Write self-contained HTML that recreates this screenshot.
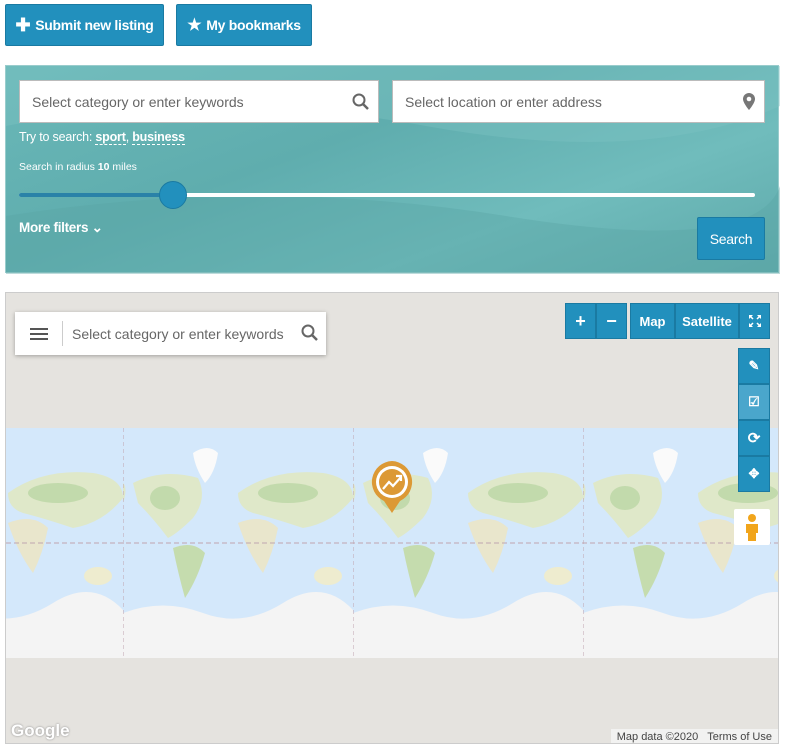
<!DOCTYPE html>
<html><head><style>
*{box-sizing:border-box;margin:0;padding:0}
body{width:787px;height:752px;background:#fff;font-family:"Liberation Sans",sans-serif;position:relative;overflow:hidden}
.btn{position:absolute;background:#2290bd;border:1px solid #1a7aa2;border-radius:2px;color:#fff;font-size:14px;font-weight:bold;display:flex;align-items:center;justify-content:center;letter-spacing:-0.3px}
.panel{position:absolute;left:5px;top:65px;width:774px;height:208px;background:linear-gradient(160deg,#6ab8b8,#5fadae 40%,#70bcbc 70%,#5ea9aa);border:1px solid #9cc}
.inp{position:absolute;background:#fff;border:1px solid #bbb;height:43px;font-size:14px;color:#666;padding-left:12px;display:flex;align-items:center}
.w{color:#fff;position:absolute}
.cb{position:absolute;background:#2290bd;color:#fff;font-size:13px;font-weight:bold;display:flex;align-items:center;justify-content:center;border:1px solid #1a7aa2}
</style></head><body>
<div class="btn" style="left:5px;top:4px;width:159px;height:42px"><span style="font-size:18px;margin-right:5px">✚</span>Submit new listing</div>
<div class="btn" style="left:176px;top:4px;width:136px;height:42px"><span style="font-size:16px;margin-right:5px">★</span>My bookmarks</div>

<div class="panel">
<svg width="774" height="208" style="position:absolute;left:0;top:0"><path d="M0 60 Q200 20 420 60 T774 40 V0 H0Z" fill="#7cc3c3" opacity=".4"/><path d="M0 150 Q250 110 500 150 T774 120 V208 H0Z" fill="#5aa5a6" opacity=".4"/></svg>
<div class="inp" style="left:13px;top:14px;width:360px">Select category or enter keywords
<svg width="18" height="18" style="position:absolute;right:8px;top:12px"><circle cx="7" cy="7" r="5.5" fill="none" stroke="#666" stroke-width="2"/><path d="M11 11l5 5" stroke="#666" stroke-width="2.5"/></svg></div>
<div class="inp" style="left:386px;top:14px;width:373px">Select location or enter address
<svg width="12" height="17" style="position:absolute;right:9px;top:12px"><path d="M6 0a6 6 0 0 0-6 6c0 4 6 11 6 11s6-7 6-11a6 6 0 0 0-6-6z" fill="#777"/><circle cx="6" cy="6" r="2.3" fill="#fff"/></svg></div>
<div class="w" style="left:13px;top:64px;font-size:12.5px;letter-spacing:-0.2px">Try to search: <b style="border-bottom:1px dashed #fff">sport</b>, <b style="border-bottom:1px dashed #fff">business</b></div>
<div class="w" style="left:13px;top:95px;font-size:10.5px">Search in radius <b>10</b> miles</div>
<div style="position:absolute;left:13px;top:127px;width:736px;height:4px;background:#fff;border-radius:2px"></div>
<div style="position:absolute;left:13px;top:127px;width:155px;height:4px;background:#2a82a8;border-radius:2px"></div>
<div style="position:absolute;left:153px;top:115px;width:28px;height:28px;border-radius:50%;background:#2290bd;border:1px solid #1a7aa2"></div>
<div class="w" style="left:13px;top:154px;font-size:13.5px;font-weight:bold;letter-spacing:-0.3px">More filters ⌄</div>
<div class="btn" style="left:691px;top:151px;width:68px;height:43px;font-weight:normal;font-size:14px">Search</div>
</div>

<div style="position:absolute;left:5px;top:292px;width:774px;height:452px;background:#e5e3df;border:1px solid #ccc;overflow:hidden">
<svg width="774" height="452" style="position:absolute;left:0;top:0">
<defs><pattern id="t" x="117" y="135" width="230" height="230" patternUnits="userSpaceOnUse">
<rect width="230" height="230" fill="#d4e8fb"/>
<path d="M10 55 Q40 40 75 50 Q85 70 70 90 Q55 105 45 110 Q30 90 15 75Z" fill="#dfe8c9"/><ellipse cx="42" cy="70" rx="15" ry="12" fill="#c2daac"/>
<path d="M70 25 Q85 15 95 25 Q92 45 82 55 Q72 40 70 25Z" fill="#fafafa"/>
<path d="M50 120 Q70 112 82 125 Q75 150 62 170 Q55 145 50 120Z" fill="#c5dcae"/>
<path d="M115 95 Q140 85 155 100 Q150 125 140 145 Q125 125 115 95Z" fill="#e9e6cc"/>
<path d="M115 65 Q150 40 200 45 Q230 50 230 70 Q210 95 180 100 Q150 90 130 85 Q115 80 115 65Z" fill="#dfe8c9"/><ellipse cx="165" cy="65" rx="30" ry="10" fill="#c2daac"/>
<path d="M0 55 Q5 60 0 75Z" fill="#dfe8c9"/>
<ellipse cx="205" cy="148" rx="14" ry="9" fill="#eeeccf"/>
<path d="M0 185 Q40 170 80 185 T160 175 T230 182 V230 H0Z" fill="#f4f4f4"/>
<path d="M0 0V230" stroke="#c0a5af" stroke-dasharray="4 3"/>
</pattern></defs>
<rect x="0" y="135" width="774" height="230" fill="url(#t)"/>
<path d="M0 250H774" stroke="#c0a5af" stroke-dasharray="5 3"/>
</svg>
<div style="position:absolute;left:9px;top:19px;width:311px;height:43px;background:#fff;box-shadow:0 1px 4px rgba(0,0,0,.3);display:flex;align-items:center;font-size:14px;color:#666">
<div style="width:48px;height:25px;border-right:1px solid #ccc;display:flex;align-items:center;justify-content:center"><svg width="18" height="14"><path d="M0 2h18M0 7h18M0 12h18" stroke="#555" stroke-width="2"/></svg></div>
<span style="margin-left:9px">Select category or enter keywords</span>
<svg width="18" height="18" style="position:absolute;right:7px;top:12px"><circle cx="7" cy="7" r="5.5" fill="none" stroke="#666" stroke-width="2"/><path d="M11 11l5 5" stroke="#666" stroke-width="2.5"/></svg></div>
<div class="cb" style="left:559px;top:10px;width:31px;height:36px;font-size:18px">+</div>
<div class="cb" style="left:590px;top:10px;width:31px;height:36px;font-size:18px">−</div>
<div class="cb" style="left:624px;top:10px;width:45px;height:36px">Map</div>
<div class="cb" style="left:669px;top:10px;width:64px;height:36px">Satellite</div>
<div class="cb" style="left:733px;top:10px;width:31px;height:36px"><svg width="12" height="12"><path d="M0 0h4L0 4zM12 0v4L8 0zM0 12V8l4 4zM12 12H8l4-4z" fill="#fff"/><path d="M1 1l3 3M11 1L8 4M1 11l3-3M11 11L8 8" stroke="#fff" stroke-width="1.5"/></svg></div>
<div class="cb" style="left:732px;top:55px;width:32px;height:36px">✎</div>
<div class="cb" style="left:732px;top:91px;width:32px;height:36px;background:#4aa6cc">☑</div>
<div class="cb" style="left:732px;top:127px;width:32px;height:36px;font-size:15px">⟳</div>
<div class="cb" style="left:732px;top:163px;width:32px;height:36px">✥</div>
<div style="position:absolute;left:728px;top:216px;width:36px;height:36px;background:#fff;border-radius:2px"><svg width="36" height="36"><circle cx="18" cy="9" r="4" fill="#f1a51b"/><path d="M12 15h12v9h-2v8h-8v-8h-2z" fill="#f1a51b"/></svg></div>
<svg width="46" height="56" style="position:absolute;left:363px;top:166px"><path d="M23 2a21 21 0 0 1 8 40l-8 12-8-12a21 21 0 0 1 8-40z" fill="#dc9935"/><circle cx="23" cy="23" r="16" fill="#fff"/><circle cx="23" cy="23" r="13" fill="#dc9935"/><path d="M14 30l6-7 4 4 8-9M27 17h5v5" stroke="#fff" stroke-width="2.2" fill="none"/></svg>
<div style="position:absolute;left:5px;top:428px;font-size:17px;color:#fff;font-weight:bold;text-shadow:0 0 2px #888">Google</div>
<div style="position:absolute;right:0;top:436px;height:16px;background:rgba(245,245,245,.8);font-size:11px;color:#444;padding:2px 6px">Map data ©2020 &nbsp; Terms of Use</div>
</div>
</body></html>
